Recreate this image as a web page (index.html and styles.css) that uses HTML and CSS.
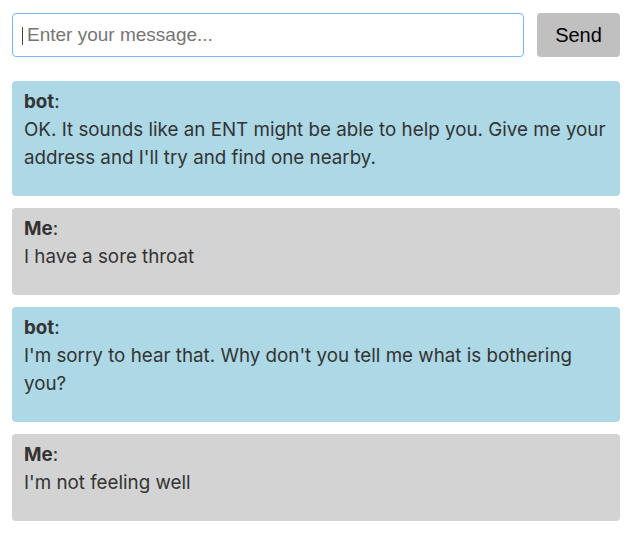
FILE: index.html
```html
<!DOCTYPE html>
<html>
<head>
<meta charset="utf-8">
<link rel="stylesheet" href="styles.css">
</head>
<body>
<div class="chat">
  <form class="composer">
    <div class="field">
      <input class="input" type="text" placeholder="Enter your message...">
      <span class="caret"></span>
    </div>
    <button class="send" type="button">Send</button>
  </form>
  <div class="messages">
    <div class="msg bot"><div class="who"><b>bot</b>:</div><div class="text">OK. It sounds like an ENT might be able to help you. Give me your address and I'll try and find one nearby.</div></div>
    <div class="msg me"><div class="who"><b>Me</b>:</div><div class="text">I have a sore throat</div></div>
    <div class="msg bot"><div class="who"><b>bot</b>:</div><div class="text">I'm sorry to hear that. Why don't you tell me what is bothering you?</div></div>
    <div class="msg me"><div class="who"><b>Me</b>:</div><div class="text">I'm not feeling well</div></div>
  </div>
</div>
</body>
</html>
```

FILE: styles.css
```css
html, body {
  margin: 0;
  padding: 0;
  background: #ffffff;
}
body {
  font-family: "Inter", "Noto Sans", sans-serif;
}
.chat {
  padding: 13px 20px 0 12px;
}
.composer {
  display: flex;
  gap: 13px;
  height: 44px;
  margin: 0 0 24px 0;
}
.field {
  position: relative;
  flex: 1;
  display: flex;
}
.input {
  flex: 1;
  box-sizing: border-box;
  height: 44px;
  margin: 0;
  border: 1px solid #7db6ee;
  border-radius: 4px;
  padding: 0 10px 0 14px;
  font-family: "Liberation Sans", Arial, sans-serif;
  font-size: 19px;
  color: #222;
  outline: none;
}
.input::placeholder {
  color: #757575;
}
.caret {
  position: absolute;
  left: 10px;
  top: 14px;
  width: 1px;
  height: 18px;
  background: #444;
}
.send {
  width: 83px;
  height: 44px;
  border: none;
  border-radius: 4px;
  background: #c0c0c0;
  color: #000;
  font-family: "Liberation Sans", Arial, sans-serif;
  font-size: 20px;
  padding: 0;
}
.messages {
  display: flex;
  flex-direction: column;
  gap: 12px;
}
.msg {
  border-radius: 4px;
  padding: 6px 12px 24px 12px;
  color: #333333;
  font-size: 18.8px;
  line-height: 28px;
}
.who {
  line-height: 29px;
}
.bot {
  background: #add8e6;
}
.me {
  background: #d3d3d3;
}
.who b {
  font-weight: 700;
}
```
